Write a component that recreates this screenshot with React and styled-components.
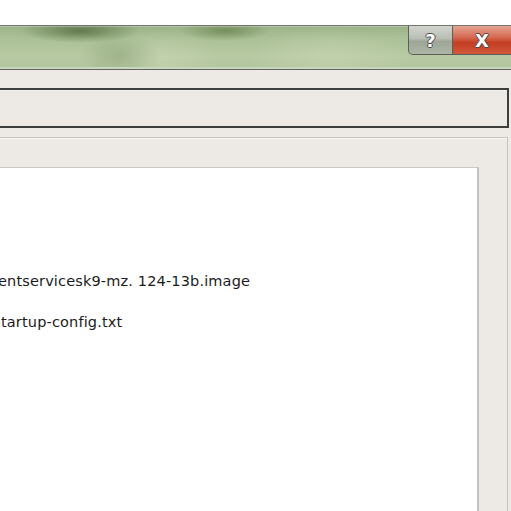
import React from "react";
import styled, { createGlobalStyle } from "styled-components";

const Global = createGlobalStyle`
  html, body {
    margin: 0;
    padding: 0;
    background: #ffffff;
    overflow: hidden;
  }
  body {
    font-family: "DejaVu Sans", "Liberation Sans", sans-serif;
  }
`;

const Window = styled.div`
  margin-top: 25px;
  width: 511px;
  height: 486px;
  display: flex;
  flex-direction: column;
  background: #edeae6;
`;

const TitleBar = styled.div`
  height: 43px;
  border-top: 1px solid #70746c;
  border-bottom: 1px solid #62675e;
  display: flex;
  justify-content: flex-end;
  align-items: flex-start;
  background:
    radial-gradient(ellipse 60px 12px at 80px 5px, rgba(70, 95, 50, 0.7), rgba(70, 95, 50, 0) 100%),
    radial-gradient(ellipse 45px 10px at 225px 5px, rgba(80, 110, 55, 0.55), rgba(80, 110, 55, 0) 100%),
    radial-gradient(ellipse 40px 22px at 120px 30px, rgba(110, 135, 90, 0.35), rgba(110, 135, 90, 0) 100%),
    radial-gradient(ellipse 60px 30px at 160px 34px, rgba(205, 218, 185, 0.5), rgba(205, 218, 185, 0) 100%),
    radial-gradient(ellipse 80px 30px at 330px 30px, rgba(205, 218, 185, 0.45), rgba(205, 218, 185, 0) 100%),
    linear-gradient(180deg, #9cb288 0%, #acc197 30%, #b7c9a2 70%, #b3c59e 100%);
  box-shadow: inset 0 1px 0 rgba(255, 255, 255, 0.25), inset 0 -2px 0 #c9d5bd;
`;

const CaptionButton = styled.div`
  height: 29px;
  width: ${(p) => p.$w}px;
  display: flex;
  align-items: center;
  justify-content: center;
  box-sizing: border-box;
  border: 1px solid #5c5f5a;
  border-top: none;
  font-family: "DejaVu Sans", "Liberation Sans", sans-serif;
  font-weight: bold;
  font-size: ${(p) => p.$fs}px;
  color: #ffffff;
  text-shadow: 1px 0 0 #4a4a4a, -1px 0 0 #4a4a4a, 0 1px 0 #4a4a4a, 0 -1px 0 #4a4a4a;
  background: ${(p) =>
    p.$close
      ? "linear-gradient(180deg, #e6a493 0%, #d46a52 40%, #c33d22 60%, #d0583c 100%)"
      : "linear-gradient(180deg, #d2d6cf 0%, #b8bdb4 45%, #9da596 55%, #aeb7a6 100%)"};
  border-radius: ${(p) => (p.$close ? "0" : "0 0 0 5px")};
  border-left: ${(p) => (p.$close ? "none" : "1px solid #5c5f5a")};
  border-right: ${(p) => (p.$close ? "none" : "1px solid #5c5f5a")};
`;

const Client = styled.div`
  flex: 1;
  display: flex;
  flex-direction: column;
  padding-top: 18px;
  min-height: 0;
`;

const AddressBox = styled.div`
  height: 36px;
  margin-right: 2px;
  border: 2px solid #3e3e3c;
  border-left: none;
  background: #edeae6;
  box-shadow: inset 0 1px 0 #f6f4f1;
`;

const Panel = styled.div`
  flex: 1;
  margin-top: 9px;
  margin-right: 3px;
  border-top: 1px solid #c4c3bf;
  border-right: 1px solid #c4c3bf;
  box-shadow: inset 0 1px 0 #f8f7f4;
  padding-top: 29px;
  padding-right: 28px;
  display: flex;
  flex-direction: column;
  min-height: 0;
`;

const FileList = styled.div`
  flex: 1;
  background: #ffffff;
  border-top: 1px solid #c9c8c4;
  border-right: 2px solid #c3c2be;
  padding-top: 104px;
  display: flex;
  flex-direction: column;
  gap: 22px;
`;

const FileRow = styled.div`
  height: 19px;
  line-height: 19px;
  font-family: Tahoma, "DejaVu Sans", sans-serif;
  font-size: 14.5px;
  letter-spacing: 0.15px;
  color: #1b1b1b;
  white-space: nowrap;
  overflow: hidden;
  text-indent: ${(p) => p.$shift}px;
`;

export default function App() {
  return (
    <>
      <Global />
      <Window>
        <TitleBar>
          <CaptionButton $w={45} $fs={18}>?</CaptionButton>
          <CaptionButton $w={58} $fs={18} $close>X</CaptionButton>
        </TitleBar>
        <Client>
          <AddressBox />
          <Panel>
            <FileList>
              <FileRow $shift={-2}>entservicesk9-mz. 124-13b.image</FileRow>
              <FileRow $shift={1}>tartup-config.txt</FileRow>
            </FileList>
          </Panel>
        </Client>
      </Window>
    </>
  );
}
